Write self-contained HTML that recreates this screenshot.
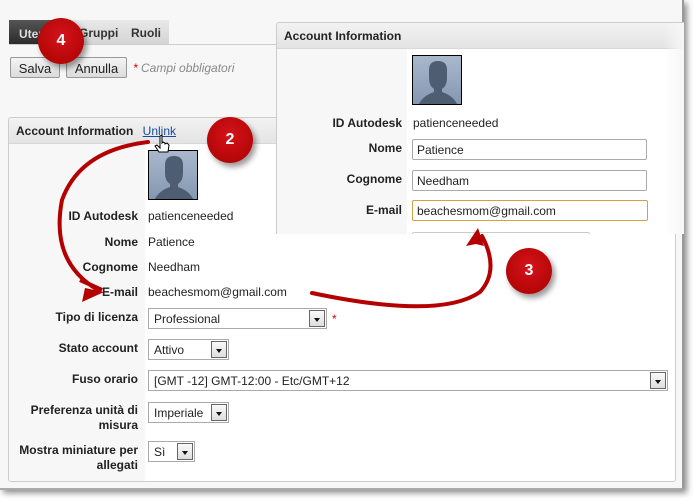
<!DOCTYPE html>
<html><head><meta charset="utf-8"><style>
*{margin:0;padding:0;box-sizing:border-box}
body{width:698px;height:504px;background:#fff;font-family:"Liberation Sans",Arial,sans-serif;font-size:12px;color:#222;position:relative;overflow:hidden}
.frame{position:absolute;left:0;top:0;width:684px;height:490px;background:#f7f7f7;border-right:2px solid #999;border-bottom:2px solid #aaa;box-shadow:3px 3px 6px rgba(0,0,0,.45)}
.abs{position:absolute}
.tabs{left:9px;top:20px;width:160px;height:25px;background:linear-gradient(#e8e8e8,#d4d4d4)}
.tabs .t1{position:absolute;left:0;top:0;width:62px;height:25px;background:linear-gradient(#555,#2a2a2a);color:#ddd;font-weight:bold;padding:7px 0 0 10px}
.tabline{left:9px;top:44px;width:268px;height:1px;background:#ccc}
.btn{height:21px;border:1px solid #999;border-radius:2px;background:linear-gradient(#f4f4f4,#dcdcdc);font-size:13px;padding:3px 0 0;text-align:center;color:#222}
.panel{left:8px;top:117px;width:668px;height:365px;border:1px solid #ccc;border-radius:3px;background:#fff;overflow:hidden}
.phead{height:26px;background:linear-gradient(#f2f2f2,#e4e4e4);border-bottom:1px solid #d8d8d8;font-weight:bold;padding:6px 0 0 7px}
.lcol{position:absolute;left:0;top:26px;width:136px;bottom:0;background:#f7f7f7}
.lbl{position:absolute;font-weight:bold;text-align:right;font-size:12px;line-height:15px}
.val{position:absolute;font-size:12px}
.sel{position:absolute;height:21px;border:1px solid #aaa;background:#fff;font-size:12px;padding:3px 0 0 5px}
.sel i{position:absolute;right:1px;top:1px;width:16px;height:17px;border:1px solid #666;background:linear-gradient(#fafafa,#ddd)}
.sel i:after{content:"";position:absolute;left:4px;top:7px;border:3px solid transparent;border-top:4px solid #111}
.avatar{position:absolute;width:50px;height:50px;border:1px solid #000;background:linear-gradient(#a9b8cc,#8597b2);overflow:hidden}
.pop{left:276px;top:22px;width:408px;height:212px;background:#fff;border-left:1px solid #ccc;border-top:1px solid #ccc;border-radius:3px 0 0 0;overflow:hidden}
.inp{position:absolute;height:21px;border:1px solid #aaa;background:#fff;font-size:12px;padding:3px 0 0 4px;border-radius:2px}
.circ{position:absolute;width:46px;height:46px;border-radius:50%;background:radial-gradient(circle at 50% 40%,#d4141a,#a80000);color:#fff;font-weight:bold;font-size:16px;text-align:center;line-height:46px;box-shadow:3px 4px 6px rgba(0,0,0,.4)}
</style></head><body>
<div class="frame"></div>
<div class="abs tabs"><div class="t1">Utenti</div><span style="position:absolute;left:70px;top:6px;font-weight:bold;color:#333">Gruppi</span><span style="position:absolute;left:122px;top:6px;font-weight:bold;color:#333">Ruoli</span></div>
<div class="abs tabline"></div>
<div class="abs btn" style="left:10px;top:57px;width:50px">Salva</div>
<div class="abs btn" style="left:66px;top:57px;width:61px">Annulla</div>
<div class="abs" style="left:133px;top:61px;color:#888;font-style:italic"><span style="color:#d00">*</span> Campi obbligatori</div>

<div class="abs panel">
<div class="phead">Account Information <span style="color:#1a4aa0;text-decoration:underline;font-weight:normal;margin-left:6px">Unlink</span></div>
<div class="lcol"></div>
<div class="avatar" style="left:139px;top:32px"><svg width="50" height="50"><path d="M16 14q0-9 9-9t9 9v8q0 8-5 11v3q12 4 16 14H5q4-10 16-14v-3q-5-3-5-11z" fill="#4f5d72"/></svg></div>
<div class="lbl" style="right:537px;top:91px">ID Autodesk</div><div class="val" style="left:139px;top:91px">patienceneeded</div>
<div class="lbl" style="right:537px;top:117px">Nome</div><div class="val" style="left:139px;top:117px">Patience</div>
<div class="lbl" style="right:537px;top:142px">Cognome</div><div class="val" style="left:139px;top:142px">Needham</div>
<div class="lbl" style="right:537px;top:167px">E-mail</div><div class="val" style="left:139px;top:167px">beachesmom@gmail.com</div>
<div class="lbl" style="right:537px;top:192px">Tipo di licenza</div>
<div class="sel" style="left:139px;top:190px;width:179px">Professional<i></i></div><span class="abs" style="left:323px;top:194px;color:#d00">*</span>
<div class="lbl" style="right:537px;top:223px">Stato account</div>
<div class="sel" style="left:139px;top:221px;width:81px">Attivo<i></i></div>
<div class="lbl" style="right:537px;top:254px">Fuso orario</div>
<div class="sel" style="left:139px;top:252px;width:520px">[GMT -12] GMT-12:00 - Etc/GMT+12<i></i></div>
<div class="lbl" style="right:537px;top:285px">Preferenza unità di<br>misura</div>
<div class="sel" style="left:139px;top:284px;width:81px">Imperiale<i></i></div>
<div class="lbl" style="right:537px;top:325px">Mostra miniature per<br>allegati</div>
<div class="sel" style="left:139px;top:323px;width:47px">Sì<i></i></div>
</div>

<div class="abs pop">
<div class="phead" style="height:26px">Account Information</div>
<div style="position:absolute;left:0;top:26px;width:130px;bottom:0;background:#f7f7f7"></div>
<div class="avatar" style="left:135px;top:32px"><svg width="50" height="50"><path d="M16 14q0-9 9-9t9 9v8q0 8-5 11v3q12 4 16 14H5q4-10 16-14v-3q-5-3-5-11z" fill="#4f5d72"/></svg></div>
<div class="lbl" style="right:282px;top:93px">ID Autodesk</div><div class="val" style="left:136px;top:93px">patienceneeded</div>
<div class="lbl" style="right:282px;top:118px">Nome</div><div class="inp" style="left:135px;top:116px;width:235px">Patience</div>
<div class="lbl" style="right:282px;top:149px">Cognome</div><div class="inp" style="left:135px;top:147px;width:235px">Needham</div>
<div class="lbl" style="right:282px;top:180px">E-mail</div><div class="inp" style="left:135px;top:177px;width:236px;border-color:#d8a040">beachesmom@gmail.com</div>
<div class="inp" style="left:135px;top:209px;width:178px;border-color:#ccc"></div>
<div style="position:absolute;right:0;top:0;width:20px;height:100%;background:linear-gradient(90deg,rgba(247,247,247,0),#f7f7f7)"></div>
</div>

<svg class="abs" style="left:0;top:0" width="698" height="504">
<g fill="none" stroke="#b40000" stroke-width="4" stroke-linecap="round">
<path d="M148 142Q80 150 62 200Q50 262 98 290"/>
<path d="M312 293Q440 320 480 292Q500 270 482 236"/>
</g>
<path d="M104 292l-22 10l3-14z" fill="#b40000"/>
<path d="M80 280l22 10" stroke="#b40000" stroke-width="4"/>
<path d="M478 228l-12 18l10 -2l8 2z" fill="#b40000"/>
<path d="M160 136v12l-3-3l-2 1l4 6h9l1-7l-2-2l-2 1v-1l-2-1l-1 1v-8z" fill="#fff" stroke="#000" stroke-width="1"/>
</svg>
<div class="circ" style="left:38px;top:18px">4</div>
<div class="circ" style="left:207px;top:117px">2</div>
<div class="circ" style="left:506px;top:248px">3</div>
</body></html>
